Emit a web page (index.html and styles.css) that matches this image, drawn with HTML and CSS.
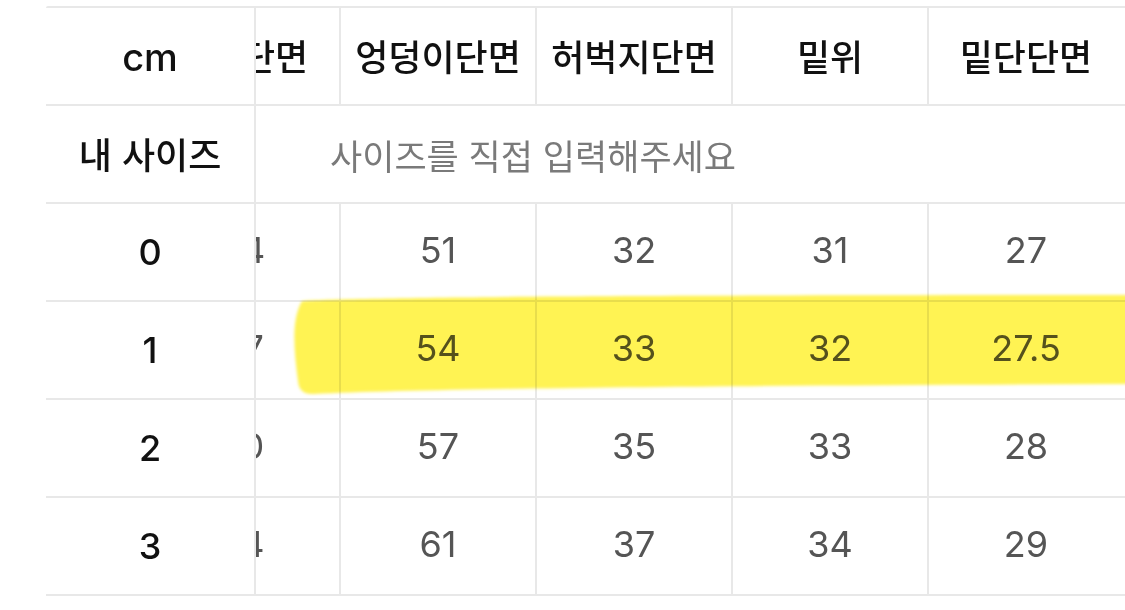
FILE: index.html
```html
<!DOCTYPE html>
<html lang="ko">
<head>
<meta charset="utf-8">
<title>사이즈표</title>
<link rel="stylesheet" href="styles.css">
</head>
<body>
<div class="sheet">
  <div class="fixed">
    <div class="cell head latin">cm</div>
    <div class="cell head ko">내 사이즈</div>
    <div class="cell key">0</div>
    <div class="cell key">1</div>
    <div class="cell key">2</div>
    <div class="cell key">3</div>
  </div>
  <div class="scroll">
    <div class="grid">
      <div class="cell head ko">허리단면</div>
      <div class="cell head ko">엉덩이단면</div>
      <div class="cell head ko">허벅지단면</div>
      <div class="cell head ko">밑위</div>
      <div class="cell head ko last">밑단단면</div>

      <div class="cell input-row"><span class="placeholder">사이즈를 직접 입력해주세요</span></div>

      <div class="cell val">44</div>
      <div class="cell val">51</div>
      <div class="cell val">32</div>
      <div class="cell val">31</div>
      <div class="cell val last">27</div>

      <div class="cell val">47</div>
      <div class="cell val">54</div>
      <div class="cell val">33</div>
      <div class="cell val">32</div>
      <div class="cell val last">27.5</div>

      <div class="cell val">50</div>
      <div class="cell val">57</div>
      <div class="cell val">35</div>
      <div class="cell val">33</div>
      <div class="cell val last">28</div>

      <div class="cell val">54</div>
      <div class="cell val">61</div>
      <div class="cell val">37</div>
      <div class="cell val">34</div>
      <div class="cell val last">29</div>
    </div>
  </div>
  <svg class="marker" width="850" height="112" viewBox="0 0 850 112" aria-hidden="true">
    <defs>
      <filter id="soft" x="-5%" y="-20%" width="110%" height="140%">
        <feGaussianBlur stdDeviation="1.6"/>
      </filter>
    </defs>
    <path filter="url(#soft)" fill="#fff352"
      d="M14 13 C 60 9, 400 7, 850 7 L 850 96 C 500 97, 150 100, 26 106 Q 11 107 10 93 C 6 62, 3 32, 14 13 Z"/>
  </svg>
</div>
</body>
</html>
```

FILE: styles.css
```css
html, body {
  margin: 0;
  padding: 0;
  background: #ffffff;
}

body {
  width: 1125px;
  height: 610px;
  overflow: hidden;
  font-family: Inter, "Noto Sans CJK KR", sans-serif;
  color: #111111;
}

.sheet {
  position: relative;
  display: flex;
  margin-top: 6px;
  margin-left: 46px;
  border-top: 2px solid #e8e8e8;
  border-top-left-radius: 2px;
}

.fixed {
  flex: none;
  width: 208px;
  border-right: 2px solid #e8e8e8;
  display: flex;
  flex-direction: column;
}

.scroll {
  flex: 1;
  overflow: hidden;
}

.grid {
  display: grid;
  grid-template-columns: 196px 196px 196px 196px 196px;
  grid-auto-rows: 98px;
  width: max-content;
  margin-left: -111px;
}

.cell {
  box-sizing: border-box;
  height: 98px;
  display: flex;
  align-items: center;
  justify-content: center;
  border-bottom: 2px solid #e8e8e8;
  white-space: nowrap;
}

.grid .cell {
  border-right: 2px solid #e8e8e8;
}

.grid .cell.last {
  border-right: none;
  padding-right: 2px;
}

.head.ko {
  font-family: "Noto Sans CJK KR", sans-serif;
  font-size: 36px;
  font-weight: 500;
  color: #111111;
  padding-bottom: 2px;
}

.head.latin {
  font-size: 38px;
  font-weight: 500;
  color: #111111;
  padding-top: 2px;
}

.key {
  font-size: 36px;
  font-weight: 500;
  color: #111111;
  padding-top: 0;
}

.val {
  font-size: 36px;
  font-weight: 400;
  color: #555555;
  padding-bottom: 4px;
}

.input-row {
  grid-column: 1 / -1;
  justify-content: flex-start;
  padding-left: 185px;
  border-right: none !important;
}

.placeholder {
  font-family: "Noto Sans CJK KR", sans-serif;
  font-size: 35px;
  font-weight: 400;
  color: #7a7a7a;
}

.marker {
  position: absolute;
  left: 242px;
  top: 280px;
  mix-blend-mode: multiply;
  pointer-events: none;
}
```
